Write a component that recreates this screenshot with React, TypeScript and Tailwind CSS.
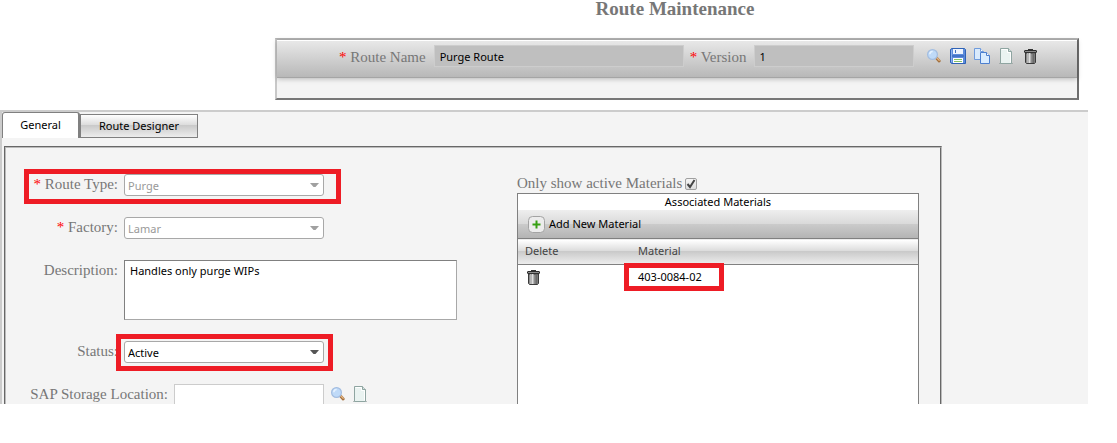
import React from 'react';

const SANS = "font-['Noto_Sans','Open_Sans',sans-serif]";

function SearchIcon() {
  return (
    <svg width="16" height="16" viewBox="0 0 16 16" aria-hidden="true">
      <path d="M10.500 10l2.700 2.900" stroke="#a4703c" strokeWidth="3" strokeLinecap="round" />
      <path d="M10.800 9.800l2.400 2.500" stroke="#e3b483" strokeWidth="1.300" strokeLinecap="round" />
      <circle cx="6.500" cy="6.500" r="4.900" fill="#bfdaf8" stroke="#a3bde0" strokeWidth="1.200" />
      <path d="M3.800 6.200a2.800 2.800 0 0 1 2.900-2.600" fill="none" stroke="#e6f2ff" strokeWidth="1.500" />
    </svg>
  );
}

function SaveIcon() {
  return (
    <svg width="16" height="16" viewBox="0 0 16 16" aria-hidden="true">
      <path d="M.5 1.500l1-1h13l1 1v14H1.500l-1-1z" fill="#5c8cdb" stroke="#2f62b5" />
      <path d="M1.500 2v12" stroke="#8db2ee" />
      <rect x="3" y="1" width="10" height="5" fill="#eef5ff" />
      <rect x="5" y="2" width="1" height="3" fill="#3f70c0" />
      <rect x="2" y="7" width="12" height="2" fill="#4474c8" />
      <rect x="3" y="10" width="10" height="5" fill="#fff" />
      <rect x="4" y="11" width="8" height="1" fill="#86c266" />
      <rect x="4" y="13" width="8" height="1" fill="#86c266" />
    </svg>
  );
}

function CopyIcon() {
  return (
    <svg width="16" height="16" viewBox="0 0 16 16" aria-hidden="true">
      <path d="M.5.5h6l3 3v8h-9z" fill="#d9eafc" stroke="#6f9bdc" />
      <path d="M6.500.5v3h3" fill="#fff" stroke="#6f9bdc" />
      <path d="M6.500 4.500h6l3 3v8h-9z" fill="#d9ecff" stroke="#4c7fcf" />
      <path d="M12.500 4.500v3h3" fill="#fff" stroke="#4c7fcf" />
    </svg>
  );
}

function PageIcon() {
  return (
    <svg width="16" height="16" viewBox="0 0 16 16" aria-hidden="true">
      <path d="M1 15.500h14" stroke="#8d9896" opacity=".6" />
      <path d="M2.500.5h8l3 3v12h-11z" fill="#eaf3f1" stroke="#8fa5a1" />
      <path d="M3.500 1.500h6v3h3v10" fill="none" stroke="#fff" />
      <path d="M10.500.5v3h3" fill="#d5e2df" stroke="#8fa5a1" />
    </svg>
  );
}

function TrashIcon() {
  return (
    <svg width="16" height="16" viewBox="0 0 16 16" aria-hidden="true">
      <path d="M6 1.500h5" stroke="#333" />
      <rect x="2.500" y="2.500" width="12" height="2" rx=".5" fill="#8c8c8c" stroke="#2d2d2d" />
      <path d="M3.500 5h10v9.500l-1 1h-8l-1-1z" fill="#8d8d8d" stroke="#3a3a3a" />
      <path d="M5.500 5v10" stroke="#b5b5b5" />
      <path d="M7.500 5v10" stroke="#dedede" strokeWidth="2" />
      <path d="M11.500 5v10" stroke="#6a6a6a" strokeWidth="2" />
    </svg>
  );
}

function IconButton({ label, children }: { label: string; children: React.ReactNode }) {
  return (
    <button type="button" aria-label={label} className="block size-4 shrink-0">
      {children}
    </button>
  );
}

function Star() {
  return <span className="text-[#f00]">*</span>;
}

function Field({
  id,
  label,
  required,
  wide,
  children,
}: {
  id: string;
  label: string;
  required?: boolean;
  wide?: boolean;
  children: React.ReactNode;
}) {
  return (
    <div className="relative flex items-start gap-[6px]">
      <label
        htmlFor={id}
        className={
          'shrink-0 whitespace-nowrap text-right leading-5 ' + (wide ? 'w-[162px]' : 'w-[112px]')
        }
      >
        {required && <Star />} {label}:
      </label>
      {children}
    </div>
  );
}

function Select({ id, value, disabled }: { id: string; value: string; disabled?: boolean }) {
  return (
    <div className="relative w-[200px]">
      <select
        id={id}
        disabled={disabled}
        defaultValue={value}
        className={
          'block h-[22px] w-full appearance-none rounded-[3px] border border-[#a8a8a8] bg-white pl-[3px] pt-[2px] text-[11px] leading-4 opacity-100 ' +
          SANS +
          (disabled ? ' text-[#999]' : ' text-black')
        }
      >
        <option>{value}</option>
      </select>
      <svg
        className={
          'pointer-events-none absolute right-[5px] top-[9px] ' +
          (disabled ? 'text-[#a0a0a0]' : 'text-[#555]')
        }
        width="9"
        height="5"
        viewBox="0 0 9 5"
        aria-hidden="true"
      >
        <path d="M0 0h9L5.500 4h-2z" fill="currentColor" />
      </svg>
    </div>
  );
}

export default function App() {
  return (
    <div className="bg-white font-['Liberation_Serif',serif] text-[15px] text-[#777]">
      <header className="ml-[275px] mr-[38px]">
        <h1 className="h-[38px] pr-1 text-center text-[19px] font-bold leading-[18px]">
          Route Maintenance
        </h1>
        <div className="h-[62px] border-2 border-b-[#777] border-l-[#c8c8c8] border-r-[#6e6e6e] border-t-[#b4b4b4] bg-[#f4f4f4]">
          <div className="flex h-[38px] items-start border-b border-t border-b-[#a5a5a5] border-t-white bg-linear-to-b from-[#e8e8e8] to-[#b8b8b8] pl-[62px] pt-1 shadow-[0_1px_5px_rgba(0,0,0,0.25)]">
            <label htmlFor="route-name" className="mr-2 whitespace-nowrap leading-6">
              <Star /> Route Name
            </label>
            <input
              id="route-name"
              readOnly
              defaultValue="Purge Route"
              className={`h-[22px] w-[250px] border border-[#cdcdcd] bg-[#bfbfbf] px-[5px] text-[11px] text-black ${SANS}`}
            />
            <label htmlFor="version" className="ml-[6px] mr-2 whitespace-nowrap leading-6">
              <Star /> Version
            </label>
            <input
              id="version"
              readOnly
              defaultValue="1"
              className={`h-[22px] w-[160px] border border-[#cdcdcd] bg-[#bfbfbf] px-1 text-[11px] text-black ${SANS}`}
            />
            <div className="ml-3 mt-[3px] flex gap-2">
              <IconButton label="Search"><SearchIcon /></IconButton>
              <IconButton label="Save"><SaveIcon /></IconButton>
              <IconButton label="Copy"><CopyIcon /></IconButton>
              <IconButton label="New"><PageIcon /></IconButton>
              <IconButton label="Delete route"><TrashIcon /></IconButton>
            </div>
          </div>
        </div>
      </header>

      <main className="mr-[29px] mt-[10px] border-l-2 border-t-2 border-[#ccc] bg-[#f4f4f4]">
        <div role="tablist" className={`flex h-[26px] items-end text-[11px] text-black ${SANS}`}>
          <button
            type="button"
            role="tab"
            aria-selected="true"
            className="h-[26px] w-[78px] rounded-t-[3px] border border-b-0 border-r-2 border-[#808080] bg-white"
          >
            General
          </button>
          <button
            type="button"
            role="tab"
            aria-selected="false"
            className="h-6 w-[118px] border border-[#808080] bg-[linear-gradient(#fff,#dcdcdc_45%,#c8c8c8_45%,#ededed)]"
          >
            Route Designer
          </button>
        </div>

        <div className="ml-[2px] mr-[146px] mt-2 flex border-2 border-b-0 border-[#bbb] pt-[26px] [border-style:groove]">
          <form className="flex w-[511px] shrink-0 flex-col gap-[21px]">
            <Field id="route-type" label="Route Type" required>
              <Select id="route-type" value="Purge" disabled />
              <span className="pointer-events-none absolute -top-[5px] left-[18px] h-[35px] w-[317px] border-[5px] border-[#ee1c25]" />
            </Field>
            <Field id="factory" label="Factory" required>
              <Select id="factory" value="Lamar" disabled />
            </Field>
            <Field id="description" label="Description">
              <textarea
                id="description"
                defaultValue="Handles only purge WIPs"
                className={`block h-[60px] w-[333px] resize-none border border-[#a8a8a8] border-l-[#808080] border-t-[#808080] bg-white px-[5px] py-px text-[11px] leading-[18px] text-black ${SANS}`}
              />
            </Field>
            <Field id="status" label="Status">
              <Select id="status" value="Active" />
              <span className="pointer-events-none absolute -top-[7px] left-[110px] h-[37px] w-[217px] border-[5px] border-[#ee1c25]" />
            </Field>
            <Field id="storage" label="SAP Storage Location" wide>
              <input
                id="storage"
                className="h-5 w-[150px] border border-b-0 border-[#ccc] bg-white"
              />
              <div className="mt-[2px] flex gap-[6px]">
                <IconButton label="Find storage location"><SearchIcon /></IconButton>
                <IconButton label="New storage location"><PageIcon /></IconButton>
              </div>
            </Field>
          </form>

          <section className="mr-[21px] flex min-w-0 flex-1 flex-col">
            <div className="flex h-[19px] items-center gap-[3px]">
              <label htmlFor="active-only" className="whitespace-nowrap">
                Only show active Materials
              </label>
              <span className="relative size-3">
                <input
                  id="active-only"
                  type="checkbox"
                  defaultChecked
                  className="block size-3 appearance-none rounded-[2px] border border-[#a0a0a0] bg-linear-to-b from-[#f5f5f5] to-[#dcdcdc]"
                />
                <svg
                  className="pointer-events-none absolute left-0 top-0"
                  width="12"
                  height="12"
                  viewBox="0 0 12 12"
                  aria-hidden="true"
                >
                  <path d="M2.500 6l2.500 3 4.500-7" fill="none" stroke="#444" strokeWidth="2" />
                </svg>
              </span>
            </div>
            <div className={`flex-1 border border-b-0 border-[#808080] bg-white text-[11px] text-black ${SANS}`}>
              <h2 className="h-4 text-center leading-4">Associated Materials</h2>
              <div className="flex h-7 items-center bg-[linear-gradient(#eee,#d9d9d9_50%,#cbcbcb_50%,#b4b4b4)] pl-[10px]">
                <button type="button" className="flex items-center gap-1">
                  <svg width="17" height="17" viewBox="0 0 17 17" aria-hidden="true">
                    <rect x=".5" y=".5" width="16" height="16" rx="4" fill="#ececec" stroke="#a3a3a3" />
                    <path d="M8.500 4.500v8M4.500 8.500h8" stroke="#36a012" strokeWidth="2" />
                  </svg>
                  Add New Material
                </button>
              </div>
              <table className="w-full table-fixed border-collapse text-left">
                <thead>
                  <tr className="h-[26px] border-y border-[#808080] bg-[linear-gradient(#fff,#dcdcdc_45%,#c8c8c8_45%,#ededed)] text-[#444]">
                    <th className="w-[113px] p-0 pl-[7px] font-normal">Delete</th>
                    <th className="p-0 pl-[7px] font-normal">Material</th>
                  </tr>
                </thead>
                <tbody>
                  <tr className="h-6">
                    <td className="p-0 pl-[7px]">
                      <IconButton label="Delete material"><TrashIcon /></IconButton>
                    </td>
                    <td className="p-0 pl-[7px]">
                      <span className="relative block leading-[18px]">
                        403-0084-02
                        <span className="pointer-events-none absolute -left-[14px] -top-[5px] h-7 w-[100px] border-[5px] border-[#ee1c25]" />
                      </span>
                    </td>
                  </tr>
                </tbody>
              </table>
            </div>
          </section>
        </div>
      </main>
    </div>
  );
}
